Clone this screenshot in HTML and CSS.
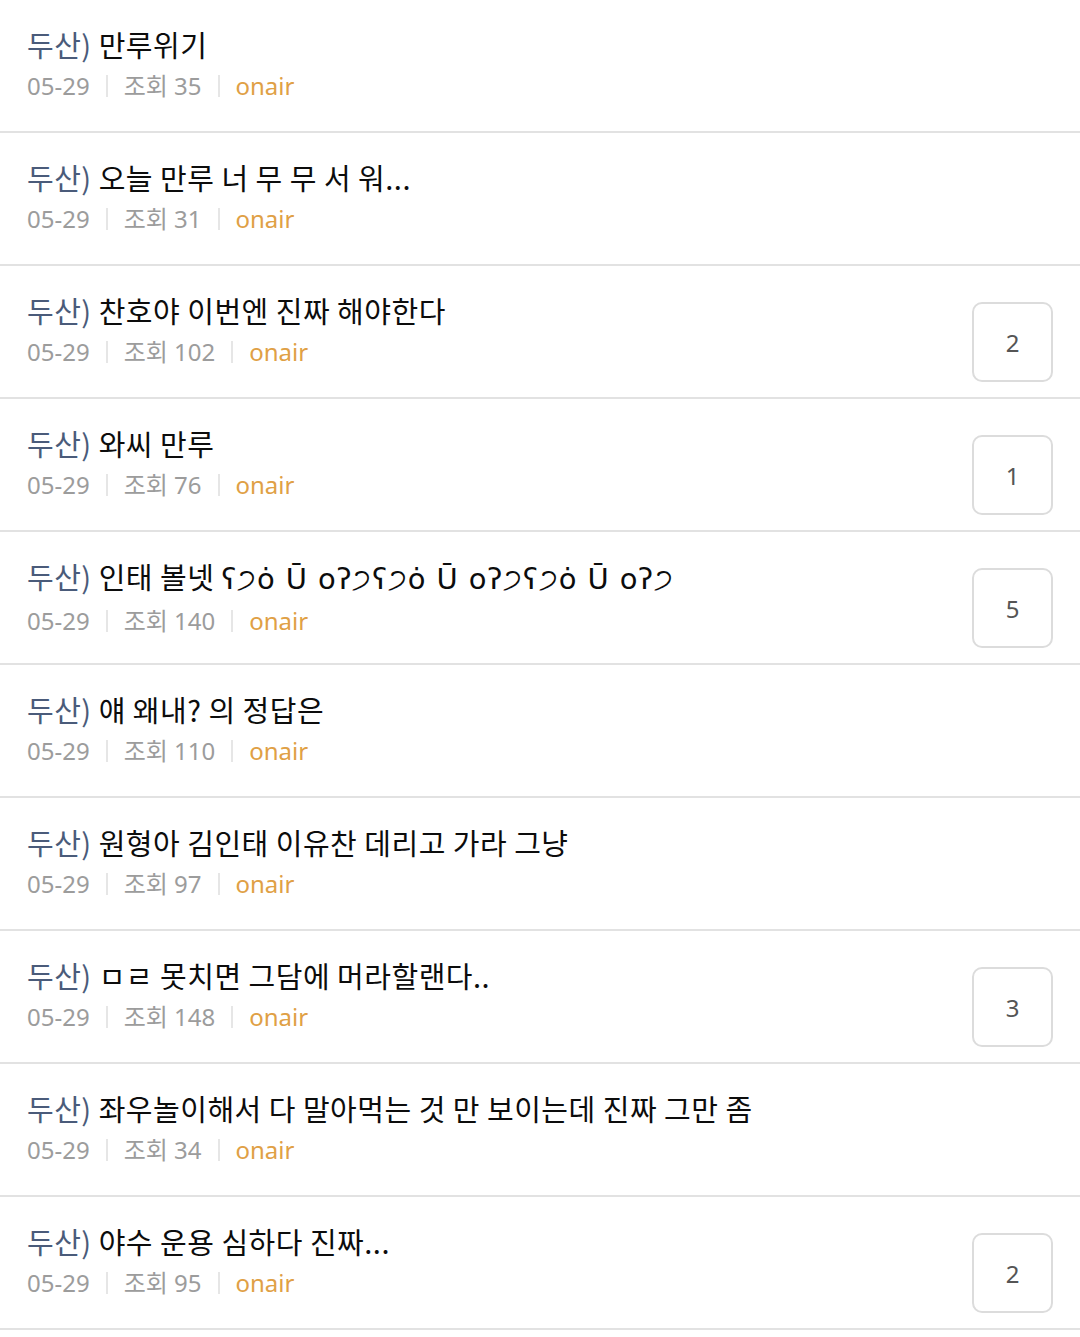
FILE: index.html
```html
<!DOCTYPE html>
<html>

<head>
    <meta charset="UTF-8">
    <title>두산 게시판</title>
    <!-- Styles  -->
    <link rel="stylesheet" href="styles.css">
</head>

<body>
    <ul class="post-list">
        <li class="post">
            <div class="post-body">
                <div class="post-title"><span class="tag">두산)</span> 만루위기</div>
                <div class="post-meta"><span>05-29</span><i class="sep"></i><span>조회 35</span><i class="sep"></i><span class="source">onair</span></div>
            </div>
        </li>
        <li class="post">
            <div class="post-body">
                <div class="post-title"><span class="tag">두산)</span> 오늘 만루 너 무 무 서 워...</div>
                <div class="post-meta"><span>05-29</span><i class="sep"></i><span>조회 31</span><i class="sep"></i><span class="source">onair</span></div>
            </div>
        </li>
        <li class="post">
            <div class="post-body">
                <div class="post-title"><span class="tag">두산)</span> 찬호야 이번엔 진짜 해야한다</div>
                <div class="post-meta"><span>05-29</span><i class="sep"></i><span>조회 102</span><i class="sep"></i><span class="source">onair</span></div>
            </div>
            <div class="comments">2</div>
        </li>
        <li class="post">
            <div class="post-body">
                <div class="post-title"><span class="tag">두산)</span> 와씨 만루</div>
                <div class="post-meta"><span>05-29</span><i class="sep"></i><span>조회 76</span><i class="sep"></i><span class="source">onair</span></div>
            </div>
            <div class="comments">1</div>
        </li>
        <li class="post">
            <div class="post-body">
                <div class="post-title"><span class="tag">두산)</span> 인태 볼넷 <span class="emo">ʕ੭ȯ Ū oʔ੭ʕ੭ȯ Ū oʔ੭ʕ੭ȯ Ū oʔ੭</span></div>
                <div class="post-meta"><span>05-29</span><i class="sep"></i><span>조회 140</span><i class="sep"></i><span class="source">onair</span></div>
            </div>
            <div class="comments">5</div>
        </li>
        <li class="post">
            <div class="post-body">
                <div class="post-title"><span class="tag">두산)</span> 얘 왜내? 의 정답은</div>
                <div class="post-meta"><span>05-29</span><i class="sep"></i><span>조회 110</span><i class="sep"></i><span class="source">onair</span></div>
            </div>
        </li>
        <li class="post">
            <div class="post-body">
                <div class="post-title"><span class="tag">두산)</span> 원형아 김인태 이유찬 데리고 가라 그냥</div>
                <div class="post-meta"><span>05-29</span><i class="sep"></i><span>조회 97</span><i class="sep"></i><span class="source">onair</span></div>
            </div>
        </li>
        <li class="post">
            <div class="post-body">
                <div class="post-title"><span class="tag">두산)</span> ㅁㄹ 못치면 그담에 머라할랜다..</div>
                <div class="post-meta"><span>05-29</span><i class="sep"></i><span>조회 148</span><i class="sep"></i><span class="source">onair</span></div>
            </div>
            <div class="comments">3</div>
        </li>
        <li class="post">
            <div class="post-body">
                <div class="post-title"><span class="tag">두산)</span> 좌우놀이해서 다 말아먹는 것 만 보이는데 진짜 그만 좀</div>
                <div class="post-meta"><span>05-29</span><i class="sep"></i><span>조회 34</span><i class="sep"></i><span class="source">onair</span></div>
            </div>
        </li>
        <li class="post">
            <div class="post-body">
                <div class="post-title"><span class="tag">두산)</span> 야수 운용 심하다 진짜...</div>
                <div class="post-meta"><span>05-29</span><i class="sep"></i><span>조회 95</span><i class="sep"></i><span class="source">onair</span></div>
            </div>
            <div class="comments">2</div>
        </li>
    </ul>
</body>

</html>
```

FILE: styles.css
```css
body {
    margin: 0;
    background-color: #fff;
    font-family: "Noto Sans", "Noto Sans CJK KR", sans-serif;
}

.post-list {
    list-style: none;
    margin: 0;
    padding: 0;
}

.post {
    display: flex;
    align-items: flex-start;
    justify-content: space-between;
    height: 131px;
    padding: 0 27px;
    border-bottom: 2px solid #e2e2e2;
}

.post-body {
    padding-top: 26px;
}

.post-title {
    font-family: "Noto Sans CJK KR", sans-serif;
    font-size: 29px;
    line-height: 36px;
    letter-spacing: 0.5px;
    color: #0c0c0c;
    white-space: nowrap;
}

.tag {
    color: #4a5b7a;
}

.emo {
    font-family: "DejaVu Sans", "Noto Sans", sans-serif;
    font-size: 29px;
    letter-spacing: 0.9px;
}

.post-meta {
    display: flex;
    align-items: center;
    margin-top: 8px;
    font-size: 24px;
    line-height: 32px;
    color: #9c9c9c;
}

.post-meta span {
    font-family: "Noto Sans", "Noto Sans CJK KR", sans-serif;
}

.sep {
    width: 2px;
    height: 22px;
    margin: 0 16px;
    background-color: #e6e6e6;
}

.source {
    color: #e0a045;
}

.comments {
    display: flex;
    align-items: center;
    justify-content: center;
    width: 81px;
    height: 80px;
    margin-top: 36px;
    box-sizing: border-box;
    border: 2px solid #dcdcdc;
    border-radius: 10px;
    font-size: 24px;
    color: #555;
}
```
